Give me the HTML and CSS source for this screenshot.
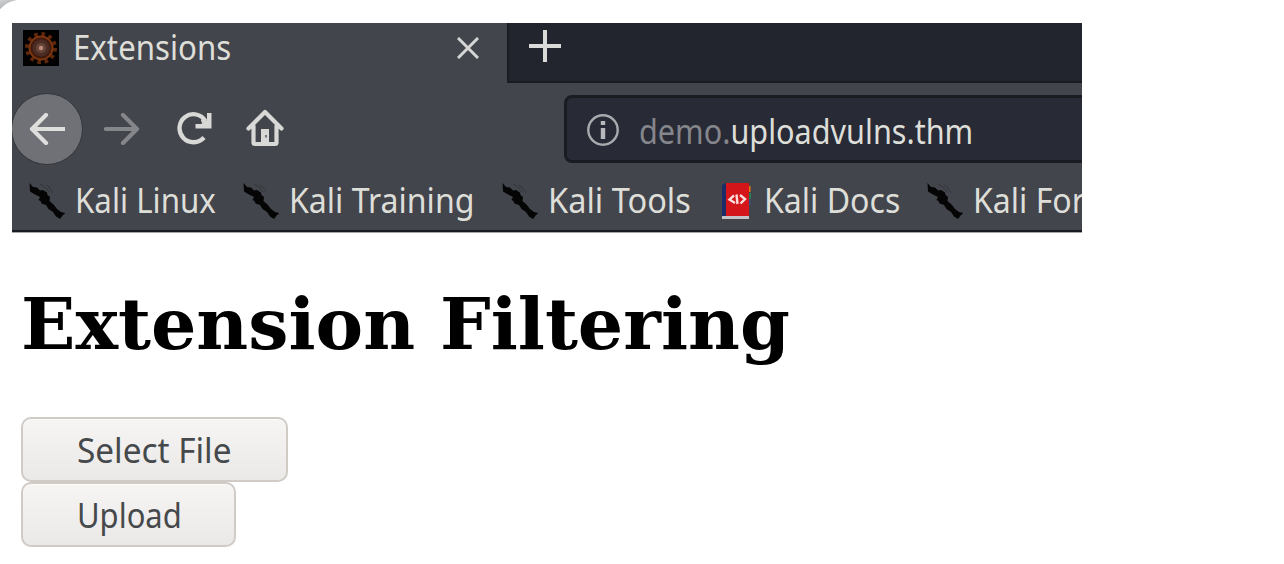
FILE: index.html
```
<!DOCTYPE html>
<html lang="en">
<head>
<meta charset="utf-8">
<title>Extensions</title>
<link rel="stylesheet" href="styles.css">
</head>
<body>
<svg class="corner" width="18" height="10" viewBox="0 0 18 10"><defs><linearGradient id="edge" x1="0" y1="0" x2="0.65" y2="0.8"><stop offset="0" stop-color="#d2d3d4"/><stop offset="1" stop-color="#a9abac"/></linearGradient></defs><path d="M0 0H17C10 1 5 4 0 9.300Z" fill="url(#edge)"/></svg>

<svg class="defs" width="0" height="0">
  <symbol id="kali" viewBox="0 0 36 36">
    <path d="M0.500 0L4 4 8 4.500 11 7.500 14 7 18 9.500 18.500 12 21 14 20.500 18 25 22 28 26 32 29 36.500 30 34 32 31 36 27 33.500 24 29 19.500 26 17 22 12.500 20.500 11.500 18 9.500 17 11 14 6 11.500 1 8.500Z" fill="#050505"/>
    <path d="M11 1L16 4 20 9M17 2L20 4 24 10" fill="none" stroke="#24262a" stroke-width="1" opacity=".5"/>
  </symbol>
</svg>

<header class="browser">
  <div class="tabs">
    <div class="tab">
      <svg class="favicon" viewBox="0 0 36 36">
        <rect width="36" height="36" fill="#020101"/>
        <circle cx="18" cy="18" r="14" fill="none" stroke="#5f270b" stroke-width="4" stroke-dasharray="3.600 3.730"/>
        <circle cx="18" cy="18" r="11.500" fill="#40180c" stroke="#7a3511" stroke-width="2"/>
        <circle cx="18" cy="18" r="8.500" fill="#4d2c22" stroke="#43271f" stroke-width="1.500" stroke-dasharray="2 2"/>
        <circle cx="18" cy="18" r="5" fill="#66453b"/>
        <circle cx="18" cy="18" r="2.200" fill="#c08a7a"/>
      </svg>
      <span class="label tab-title">Extensions</span>
      <svg class="close" viewBox="0 0 22 22"><path d="M1 1L21 21M21 1L1 21" fill="none" stroke="#d5d5d3" stroke-width="3"/></svg>
    </div>
    <div class="strip">
      <svg class="plus" viewBox="0 0 32 32"><path d="M16 0V32M0 16H32" fill="none" stroke="#dadad8" stroke-width="4"/></svg>
    </div>
  </div>

  <div class="toolbar">
    <div class="back"><svg viewBox="0 0 36 32"><path d="M17 2L3 16 17 30M3 16H35" fill="none" stroke="#dededc" stroke-width="4.200" stroke-linecap="round" stroke-linejoin="round"/></svg></div>
    <svg class="forward" viewBox="0 0 36 32"><path d="M19 2L33 16 19 30M33 16H2" fill="none" stroke="#85868a" stroke-width="4.200" stroke-linecap="round" stroke-linejoin="round"/></svg>
    <svg class="reload" viewBox="0 0 36 34"><path d="M27 25.500A14 14 0 1 1 28.500 9" fill="none" stroke="#d8d8d6" stroke-width="4.300"/><path d="M30 1H34.500V16.500H18.500V12H24L30 8Z" fill="#d8d8d6"/><path d="M25 5L33 12 28 15 24 9Z" fill="#d8d8d6"/></svg>
    <svg class="home" viewBox="0 0 38 38"><path d="M2.500 19.500L19 3 35.500 19.500M7.500 17V33.500Q7.500 35 9 35H29Q30.500 35 30.500 33.500V17" fill="none" stroke="#d8d8d6" stroke-width="4.200" stroke-linejoin="round" stroke-linecap="round"/><path d="M15 35V20H23V35Z" fill="#d8d8d6"/><rect x="19" y="26" width="2" height="2.500" fill="#73757a"/></svg>
    <div class="url">
      <svg class="info" viewBox="0 0 32 32"><circle cx="16" cy="16" r="14.700" fill="none" stroke="#a9aaae" stroke-width="2.400"/><path d="M16 7V11M16 14V25" stroke="#b8b9bc" stroke-width="4.400"/></svg>
      <span class="label address"><span class="subdomain">demo.</span>uploadvulns.thm</span>
    </div>
  </div>

  <nav class="bookmarks">
    <div class="bookmark linux"><svg class="mark"><use href="#kali"/></svg><span class="label">Kali Linux</span></div>
    <div class="bookmark training"><svg class="mark"><use href="#kali"/></svg><span class="label">Kali Training</span></div>
    <div class="bookmark tools"><svg class="mark"><use href="#kali"/></svg><span class="label">Kali Tools</span></div>
    <div class="bookmark docs"><svg class="book" viewBox="0 0 30 36"><path d="M0 2L4 0V34H0Z" fill="#1b2c66"/><path d="M4 0H27V33H4Z" fill="#d41519"/><path d="M27 3H28.500V9H27Z" fill="#e37a13"/><path d="M27 10H29V16H27Z" fill="#218051"/><path d="M27 16H28.500V22H27Z" fill="#31508b"/><path d="M0 33H27V36H0Z" fill="#c4c4c7"/><path d="M12 12.500L7.500 16.500 13 20M14.500 11.500L15.500 21M18 12L23 16 18.500 20.500" fill="none" stroke="#fbdcdb" stroke-width="2.400"/></svg><span class="label">Kali Docs</span></div>
    <div class="bookmark forums"><svg class="mark"><use href="#kali"/></svg><span class="label">Kali For</span></div>
  </nav>
</header>

<main class="content">
  <h1>Extension Filtering</h1>
  <form class="upload">
    <button class="select" type="button"><span class="label">Select File</span></button>
    <button class="send" type="button"><span class="label">Upload</span></button>
  </form>
</main>
</body>
</html>
```
FILE: styles.css
```
* { box-sizing: border-box; }
body { margin: 0; height: 564px; overflow: hidden; background: #fff; padding: 23px 0 0 12px; }
svg { display: block; flex: none; }
.corner { position: absolute; top: 0; left: 0; }
.defs { position: absolute; }
.label { display: block; font: 400 34px/40px "Noto Sans", sans-serif; white-space: nowrap; transform-origin: left center; }

.browser { width: 1070px; height: 209px; overflow: hidden; background: #43454c; border-bottom: 2px solid #1b1c21; color: #deded9; box-shadow: 0 1px #a6a6a8; }
.tabs { display: flex; height: 60px; }
.tab { display: flex; width: 495px; padding: 7px 0 0 11px; }
.favicon { width: 36px; height: 36px; }
.tab-title { width: 370px; margin: -3px 0 0 14px; transform: scaleX(.918); }
.close { width: 22px; height: 22px; margin: 7px 0 0 14px; }
.strip { flex: 1; padding: 7px 0 0 20px; background: #23252e; border-left: 2px solid #1b1d23; border-bottom: 2px solid #1b1c22; }
.plus { width: 32px; height: 32px; }

.toolbar { display: flex; height: 88px; }
.back { display: flex; flex: none; align-items: center; justify-content: center; width: 72px; height: 72px; margin: 10px 0 0 -1px; border: 1px solid #34363b; border-radius: 50%; background: #707176; }
.back svg, .forward { width: 36px; height: 32px; }
.forward { margin: 30px 0 0 21px; }
.reload { width: 36px; height: 34px; margin: 29px 0 0 37px; }
.home { width: 38px; height: 38px; margin: 26px 0 0 33px; }
.url { display: flex; width: 530px; height: 68px; flex: none; margin: 12px 0 0 280px; padding: 16px 0 0 20px; background: #282a36; border: 3px solid #1b1c22; border-radius: 8px; }
.info { width: 32px; height: 32px; }
.address { margin: -3px 0 0 20px; transform: scaleX(.9); }
.subdomain { color: #85868b; }

.bookmarks { display: flex; height: 59px; padding: 9px 0 0 17px; }
.bookmark { display: flex; flex: none; gap: 10px; }
.bookmark .label { transform: scaleX(.943); }
.bookmark.linux .label { transform: scaleX(.92); }
.bookmark.tools .label { transform: scaleX(.957); }
.mark { width: 36px; height: 36px; margin-top: 3px; }
.linux { width: 214px; }
.training { width: 259px; }
.tools { width: 220px; }
.docs { width: 205px; gap: 12px; }
.book { width: 30px; height: 36px; margin-top: 3px; }

.content { padding-left: 9px; }
h1 { margin: 50px 0 0; font: bold 71.4px/84px "DejaVu Serif", serif; color: #000; white-space: nowrap; }
.upload { display: flex; flex-direction: column; align-items: flex-start; margin-top: 51px; }
button { height: 65px; padding: 11px 0 0 54px; border: 2px solid #d1cbc6; border-radius: 10px; background: linear-gradient(#f6f5f4, #eae9e7); box-shadow: inset 0 1px #fcfbfa; color: #46494b; text-align: left; display: flex; align-items: flex-start; }
.select { width: 267px; }
.send { width: 215px; }
.select .label { transform: scaleX(.98); }
.send .label { transform: scaleX(.91); }
```
